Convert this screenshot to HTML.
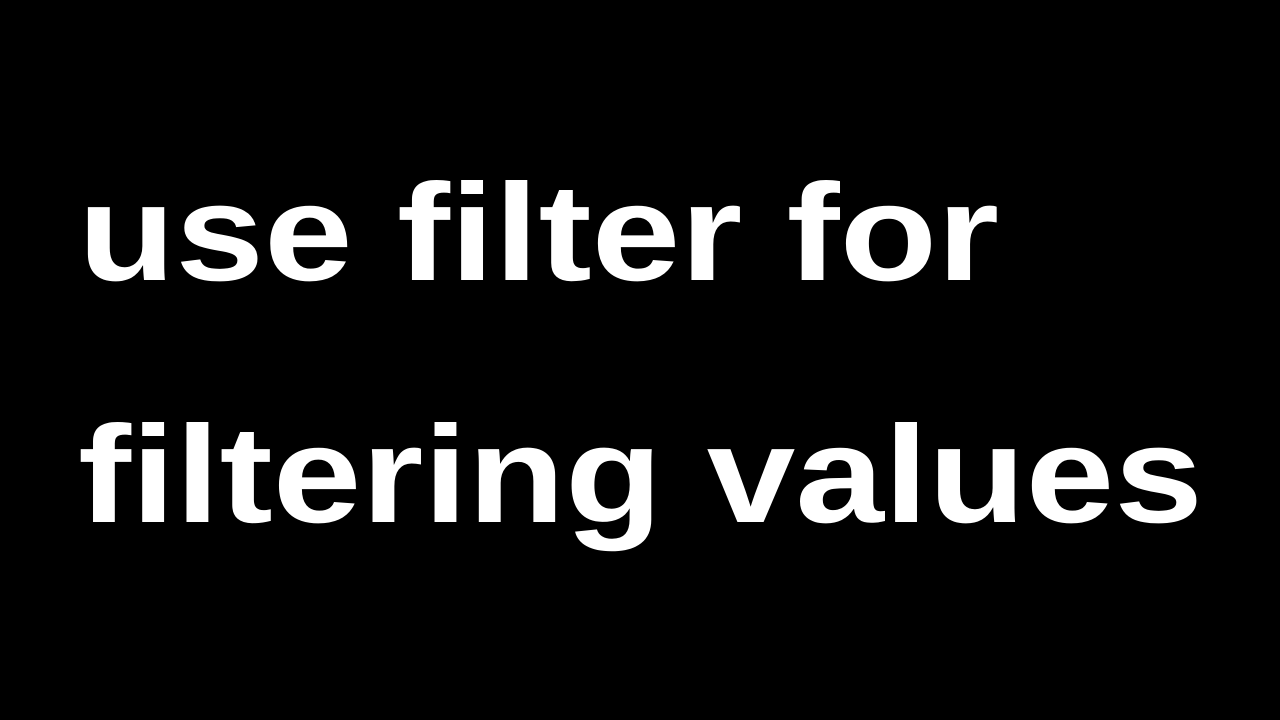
<!DOCTYPE html>
<html>
<head>
<meta charset="utf-8">
<style>
html,body{margin:0;padding:0;background:#000;width:1280px;height:720px;overflow:hidden;}
.t{position:absolute;left:78px;color:#fff;font-family:"Liberation Sans",Arial,sans-serif;font-weight:bold;font-size:138px;line-height:138px;white-space:nowrap;transform:scaleX(1.155);transform-origin:0 0;}
</style>
</head>
<body>
<div class="t" style="top:164px">use filter for</div>
<div class="t" style="top:406px">filtering values</div>
</body>
</html>
